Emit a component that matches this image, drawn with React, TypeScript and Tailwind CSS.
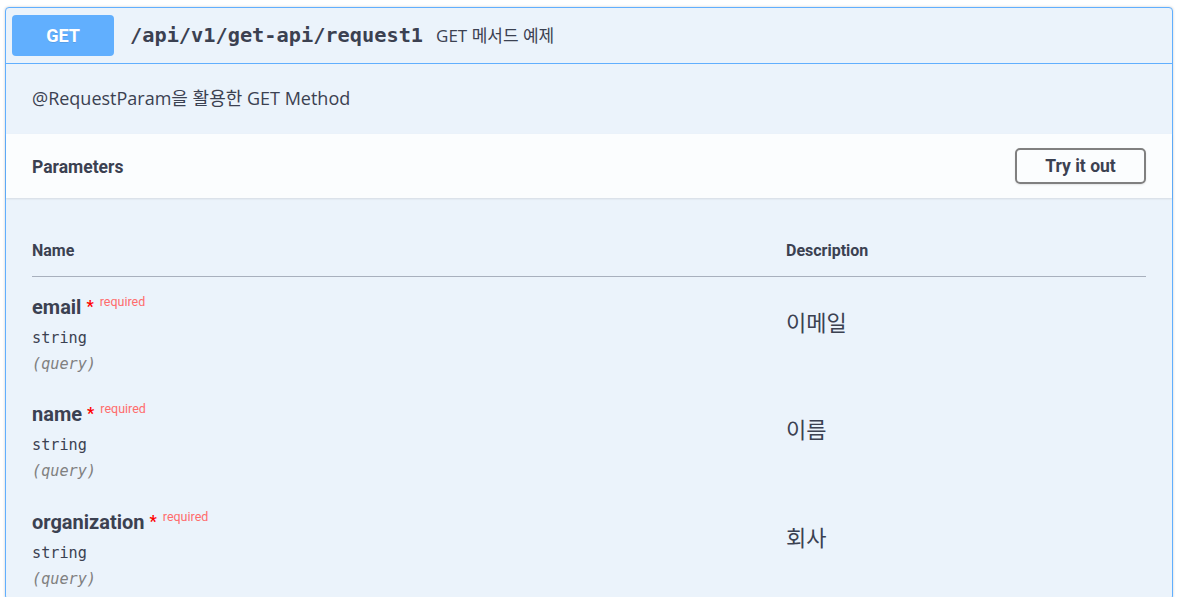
import React from "react";

const params = [
  { name: "email", desc: "이메일" },
  { name: "name", desc: "이름" },
  { name: "organization", desc: "회사" },
];

const head = "font-['Roboto','Noto_Sans_CJK_KR',sans-serif]";
const body = "font-['Open_Sans','Noto_Sans_CJK_KR',sans-serif]";
const mono = "font-['DejaVu_Sans_Mono',monospace]";

export default function App() {
  return (
    <div className="w-[1180px] h-[597px] overflow-hidden bg-white pt-[7px] pl-[5px]">
      <div className="w-[1168px] rounded-[4px] border border-[#61affe] bg-[#ebf3fb] shadow-[0_0_3px_rgba(0,0,0,0.19)] text-[#3b4151]">
        {/* Summary */}
        <div className="flex items-center border-b border-[#61affe] px-[6px] py-[7px]">
          <div
            className={`${head} flex h-[41px] w-[102px] items-center justify-center rounded-[4px] bg-[#61affe] text-[18px] font-bold text-white [text-shadow:0_1px_0_rgba(0,0,0,0.1)]`}
          >
            GET
          </div>
          <span className={`${mono} ml-[16px] text-[20.3px] font-bold`}>/api/v1/get-api/request1</span>
          <span className={`${body} ml-[13px] text-[17px]`}>GET 메서드 예제</span>
        </div>

        {/* Description */}
        <div className={`${body} flex h-[70px] items-center px-[26px] pb-[2px] text-[18px]`}>
          @RequestParam을 활용한 GET Method
        </div>

        {/* Parameters header */}
        <div className="flex h-[64px] items-center justify-between bg-[rgba(255,255,255,0.8)] px-[26px] shadow-[0_1px_2px_rgba(0,0,0,0.1)]">
          <span className={`${head} pt-[3px] text-[17.5px] font-bold`}>Parameters</span>
          <button
            className={`${head} h-[36px] w-[131px] rounded-[5px] border-2 border-[#808080] bg-transparent pt-[1px] text-[17.5px] font-bold text-[#3b4151] shadow-[0_1px_2px_rgba(0,0,0,0.1)]`}
          >
            Try it out
          </button>
        </div>

        {/* Table */}
        <div className="px-[26px]">
          <div className={`${head} grid grid-cols-[754px_1fr] border-b border-[#a8b0bd] pt-[43px] pb-[15px] text-[16px] leading-[20px] font-bold`}>
            <span>Name</span>
            <span>Description</span>
          </div>
          {params.map((p, i) => (
            <div key={p.name} className={`grid grid-cols-[754px_1fr] ${i === 1 ? "h-[108px]" : "h-[107px]"}`}>
              <div className="pt-[18px]">
                <div className="flex items-start">
                  <span className={`${head} text-[20px] leading-[24px] font-bold`}>{p.name}</span>
                  <span className={`${head} ml-[5px] mt-[4px] text-[16px] leading-[16px] font-bold text-[#ff0000]`}>*</span>
                  <span className={`${head} ml-[6px] -mt-[1px] text-[12.5px] leading-[16px] text-[#ff6c6c]`}>required</span>
                </div>
                <div className={`${mono} mt-[9px] text-[15.2px] leading-[20px]`}>string</div>
                <div className={`${mono} mt-[6px] text-[15.2px] leading-[20px] italic text-[#808080]`}>(query)</div>
              </div>
              <div className={`${body} pt-[31px] text-[22px] leading-[28px]`}>{p.desc}</div>
            </div>
          ))}
        </div>
      </div>
    </div>
  );
}
